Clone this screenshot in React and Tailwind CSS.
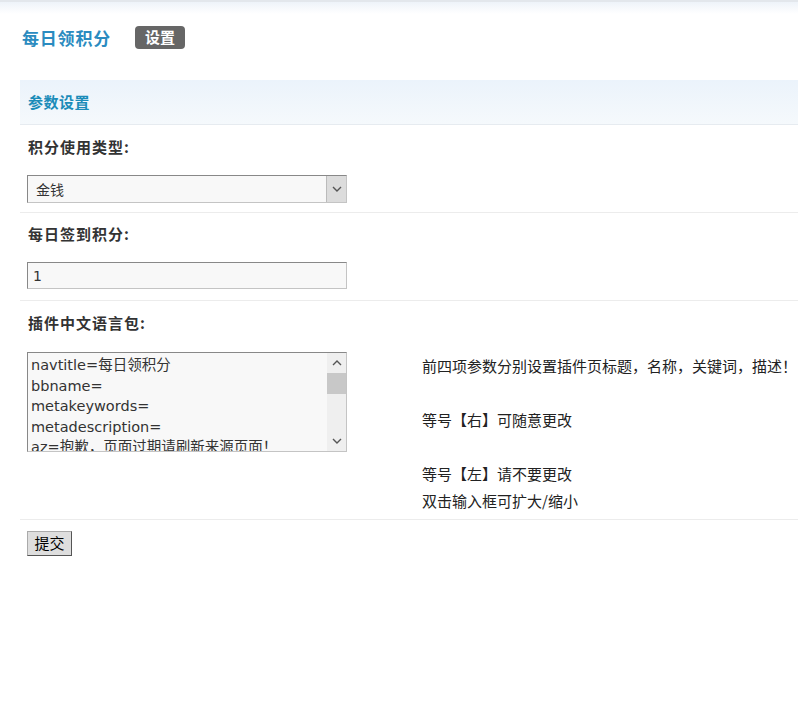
import React from 'react'

const cjk = "font-['Noto_Sans_CJK_SC',sans-serif]"

function Label({ children }) {
    return (
        <div className={`pl-[8px] text-[15px] leading-[20px] font-bold tracking-[1px] text-[#333] ${cjk}`}>
            {children}
        </div>
    )
}

function Chevron({ up }) {
    return (
        <svg width="10" height="6" viewBox="0 0 10 6" className="block">
            <path d={up ? 'M1 5 L5 1 L9 5' : 'M1 1 L5 5 L9 1'} fill="none" stroke="#555" strokeWidth="1.4" />
        </svg>
    )
}

const langText = `navtitle=每日领积分
bbname=
metakeywords=
metadescription=
az=抱歉，页面过期请刷新来源页面！
zz=您今天已经领取过了，请明天再来！`

function App() {
    return (
        <div className={`min-h-[728px] w-[798px] overflow-hidden bg-white ${cjk}`}>
            <div className="h-[14px] border-t-2 border-[#e3e7ec] bg-linear-to-b from-[#eef3f9] to-white"></div>

            {/* title */}
            <div className="mt-[12px] flex h-[23px] items-center pl-[22px]">
                <h1 className="text-[17px] font-bold tracking-[0.8px] text-[#2a8bc0]">每日领积分</h1>
                <span className="ml-[24px] flex h-[23px] w-[50px] items-center justify-center rounded-[4px] bg-[#666] text-[15px] font-bold text-white">
                    设置
                </span>
            </div>

            <div className="ml-[20px] mt-[31px]">
                <div className="flex h-[45px] items-center border-b border-[#e6ebf0] bg-linear-to-b from-[#ebf3fb] to-[#f5f9fc] pl-[8px]">
                    <span className="text-[15px] font-bold tracking-[0.5px] text-[#1b8cb9]">参数设置</span>
                </div>

                {/* 积分使用类型 */}
                <div className="border-b border-[#ececec] pb-[9px] pt-[12px]">
                    <Label>积分使用类型:</Label>
                    <div className="ml-[7px] mt-[18px] flex h-[28px] w-[320px] border border-[#888] border-b-[#c4c4c4] border-r-[#c4c4c4] bg-[#f8f8f8]">
                        <select className="flex-1 appearance-none bg-transparent pl-[8px] text-[14px] text-[#333] outline-none">
                            <option>金钱</option>
                        </select>
                        <div className="flex w-[20px] items-center justify-center border-l border-[#bbb] bg-[#dcdcdc]">
                            <Chevron />
                        </div>
                    </div>
                </div>

                {/* 每日签到积分 */}
                <div className="border-b border-[#ececec] pb-[11px] pt-[11px]">
                    <Label>每日签到积分:</Label>
                    <input
                        className="ml-[7px] mt-[18px] block h-[27px] w-[320px] border border-[#888] border-b-[#c4c4c4] border-r-[#c4c4c4] bg-[#f8f8f8] pl-[5px] font-['DejaVu_Sans',sans-serif] text-[14px] text-[#333] outline-none"
                        defaultValue="1"
                    />
                </div>

                {/* 语言包 */}
                <div className="border-b border-[#ececec] pb-[5px] pt-[12px]">
                    <Label>插件中文语言包:</Label>
                    <div className="mt-[19px] flex">
                        <div className="ml-[7px] flex h-[100px] w-[320px] border border-[#888] border-b-[#c4c4c4] border-r-[#c4c4c4] bg-[#f8f8f8]">
                            <textarea
                                className="flex-1 resize-none overflow-hidden bg-transparent pl-[3px] pt-[2px] font-['DejaVu_Sans','Noto_Sans_CJK_SC',sans-serif] text-[14.5px] leading-[20.5px] text-[#333] outline-none"
                                defaultValue={langText}
                            />
                            <div className="flex w-[19px] flex-col items-center bg-[#efefef]">
                                <div className="flex h-[20px] items-center"><Chevron up /></div>
                                <div className="h-[21px] w-full bg-[#c8c8c8]"></div>
                                <div className="flex-1"></div>
                                <div className="flex h-[20px] items-center"><Chevron /></div>
                            </div>
                        </div>
                        <div className="ml-[75px] text-[15px] leading-[27px] text-[#222]">
                            前四项参数分别设置插件页标题，名称，关键词，描述！<br /><br />
                            等号【右】可随意更改<br /><br />
                            等号【左】请不要更改<br />
                            双击输入框可扩大/缩小
                        </div>
                    </div>
                </div>

                <button className="ml-[7px] mt-[11px] h-[25px] w-[45px] border border-[#aaa] border-b-[#555] border-r-[#555] bg-[#dedede] text-[15px] text-black">
                    提交
                </button>
            </div>
        </div>
    )
}

export default App
